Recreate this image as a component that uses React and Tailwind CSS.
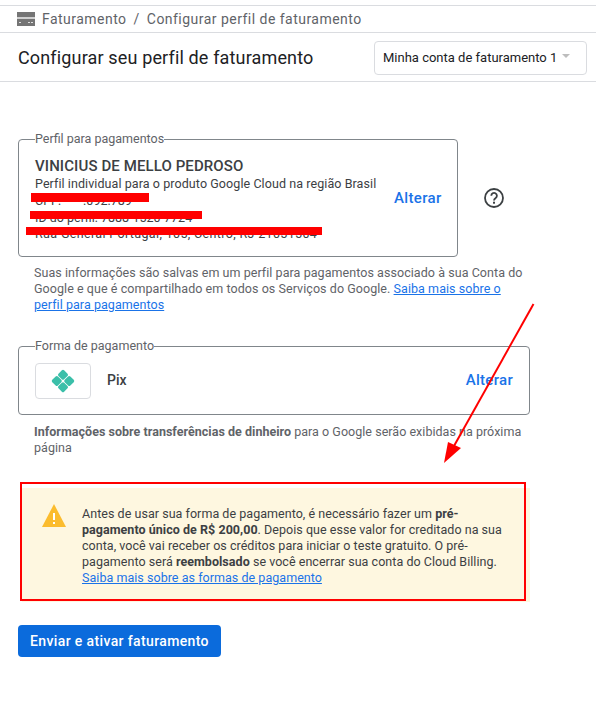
import React from "react";

function BillingIcon() {
    return (
        <svg width="18" height="14" viewBox="0 0 18 14" className="shrink-0">
            <rect x="0" y="0" width="18" height="14" fill="#757575" />
            <rect x="0" y="5" width="18" height="2" fill="#d0d0d0" />
            <rect x="2" y="10" width="2" height="1" fill="#e0e0e0" />
            <rect x="11" y="10" width="2" height="1" fill="#e0e0e0" />
            <rect x="14" y="10" width="2" height="1" fill="#e0e0e0" />
        </svg>
    );
}

function PixLogo() {
    return (
        <svg width="26" height="26" viewBox="0 0 26 26">
            <g fill="#3bbfa9" transform="rotate(45 13 13)">
                <rect x="4.600" y="4.600" width="8" height="8" rx="1.600" />
                <rect x="13.400" y="4.600" width="8" height="8" rx="1.600" />
                <rect x="4.600" y="13.400" width="8" height="8" rx="1.600" />
                <rect x="13.400" y="13.400" width="8" height="8" rx="1.600" />
            </g>
        </svg>
    );
}

export default function App() {
    return (
        <div className="relative w-[596px] h-[704px] overflow-hidden bg-white font-['Roboto',sans-serif] text-[#3c4043]">
            <div className="pt-[5px]">
                {/* breadcrumb */}
                <div className="flex items-center h-[28px] pl-[17px] border-t-[1px] border-b-[1px] border-[#dadce0] text-[14px] text-[#5f6368] tracking-[0.47px]">
                    <BillingIcon />
                    <span className="ml-[7px]">Faturamento</span>
                    <span className="mx-[7px]">/</span>
                    <span>Configurar perfil de faturamento</span>
                </div>

                {/* header */}
                <div className="flex items-center justify-between h-[49px] pl-[18px] pr-[9px] pt-[1px] border-b-[1px] border-[#dadce0]">
                    <h1 className="text-[18px] text-[#202124] leading-none tracking-[0.15px]">Configurar seu perfil de faturamento</h1>
                    <div className="flex items-center w-[213px] h-[34px] pl-[8px] rounded-[4px] border-[1px] border-[#dadce0] text-[13px] text-[#202124]">
                        <span className="whitespace-nowrap">Minha conta de faturamento 1</span>
                        <span className="ml-[5px] mb-[3px] w-0 h-0 border-l-[4px] border-r-[4px] border-t-[4px] border-l-transparent border-r-transparent border-t-[#bdbdbd]"></span>
                    </div>
                </div>
            </div>

            {/* perfil */}
            <div className="flex items-center mt-[50px] ml-[18px]">
                <fieldset className="flex items-start w-[440px] h-[125px] pl-[16px] border-[1px] border-[#80868b] rounded-[4px]">
                    <legend className="text-[12.500px] leading-[14px] text-[#5f6368]">Perfil para pagamentos</legend>
                    <div className="w-[344px] pt-[11px]">
                        <p className="text-[15px] leading-[18px] font-medium tracking-[0.1px]">VINICIUS DE MELLO PEDROSO</p>
                        <p className="text-[12.500px] leading-[17px] tracking-[0.08px] whitespace-nowrap">Perfil individual para o produto Google Cloud na região Brasil</p>
                        <p className="text-[12.500px] leading-[17px]">CPF: <span className="ml-[19px]">.092.789</span></p>
                        <p className="text-[12.500px] leading-[17px]">ID do perfil: 7888-1520-7724</p>
                        <p className="text-[12.500px] leading-[16px] tracking-[0.35px] whitespace-nowrap">Rua General Portugal, 105, Centro, RJ 21051504</p>
                    </div>
                    <span className="mt-[41px] ml-[15px] text-[15px] font-medium text-[#1a73e8] tracking-[0.35px]">Alterar</span>
                </fieldset>
                <svg width="24" height="24" viewBox="0 0 24 24" className="ml-[24px] mt-[7px]">
                    <circle cx="12" cy="12" r="9" fill="none" stroke="#3c4043" strokeWidth="1.800" />
                    <path d="M9.300 9.700a2.800 2.800 0 1 1 4.400 2.300c-1 .7-1.700 1.300-1.700 2.500" fill="none" stroke="#3c4043" strokeWidth="1.800" />
                    <rect x="11" y="15.700" width="2" height="2" fill="#3c4043" />
                </svg>
            </div>

            <p className="mt-[8px] ml-[34px] w-[500px] text-[12.500px] leading-[16px] text-[#5f6368] tracking-[0.06px] whitespace-nowrap">
                Suas informações são salvas em um perfil para pagamentos associado à sua Conta do<br />
                Google e que é compartilhado em todos os Serviços do Google. <a className="text-[#1a73e8] underline">Saiba mais sobre o</a><br />
                <a className="text-[#1a73e8] underline">perfil para pagamentos</a>
            </p>

            {/* forma de pagamento */}
            <fieldset className="flex items-center w-[512px] h-[76px] mt-[26px] ml-[18px] pl-[16px] pb-[6px] border-[1px] border-[#80868b] rounded-[4px]">
                <legend className="text-[12.500px] leading-[14px] text-[#5f6368]">Forma de pagamento</legend>
                <div className="flex items-center justify-center w-[56px] h-[36px] rounded-[4px] border-[1px] border-[#dadce0]">
                    <PixLogo />
                </div>
                <span className="ml-[16px] text-[14px] font-medium text-[#3c4043]">Pix</span>
                <span className="ml-auto mr-[16px] text-[15px] font-medium text-[#1a73e8] tracking-[0.3px]">Alterar</span>
            </fieldset>

            <p className="mt-[9px] ml-[34px] w-[495px] text-[12.500px] leading-[16px] text-[#5f6368] tracking-[0.03px]">
                <b className="font-bold">Informações sobre transferências de dinheiro</b> para o Google serão exibidas na próxima página
            </p>

            {/* aviso */}
            <div className="flex w-[508px] h-[114px] mt-[32px] ml-[22px] bg-[#fef7e0]">
                <svg width="26" height="24" viewBox="0 0 26 24" className="mt-[16px] ml-[19px] shrink-0">
                    <path d="M13 0 L25 23 L1 23Z" fill="#fbbc2e" />
                    <rect x="12" y="9" width="2" height="7" fill="#fff" />
                    <rect x="12" y="18" width="2" height="2" fill="#fff" />
                </svg>
                <p className="w-[425px] ml-[15px] pt-[18px] text-[12.500px] leading-[16px] text-[#3c4043] tracking-[0.04px]">
                    Antes de usar sua forma de pagamento, é necessário fazer um <b className="font-bold">pré-pagamento único de R$ 200,00</b>. Depois que esse valor for creditado na sua conta, você vai receber os créditos para iniciar o teste gratuito. O pré-pagamento será <b className="font-bold">reembolsado</b> se você encerrar sua conta do Cloud Billing. <a className="text-[#1a73e8] underline">Saiba mais sobre as formas de pagamento</a>
                </p>
            </div>

            <button className="block w-[203px] h-[32px] mt-[23px] ml-[18px] rounded-[4px] bg-[#0b6bdc] text-[14px] font-medium text-white tracking-[0.37px]">Enviar e ativar faturamento</button>

            {/* marcações vermelhas por cima da captura */}
            <div className="absolute left-[31px] top-[193px] w-[118px] h-[9px] bg-[#ff0000]"></div>
            <div className="absolute left-[30px] top-[211px] w-[172px] h-[8px] bg-[#ff0000]"></div>
            <div className="absolute left-[26px] top-[227px] w-[296px] h-[8px] bg-[#ff0000]"></div>
            <div className="absolute left-[20px] top-[482px] w-[506px] h-[119px] border-[2px] border-[#ff0000]"></div>
            <svg className="absolute left-[440px] top-[300px]" width="100" height="170" viewBox="0 0 100 170">
                <line x1="93.500" y1="4" x2="14" y2="146" stroke="#ff0000" strokeWidth="2" />
                <polygon points="4,163 8,142 21,148" fill="#ff0000" />
            </svg>
        </div>
    );
}
